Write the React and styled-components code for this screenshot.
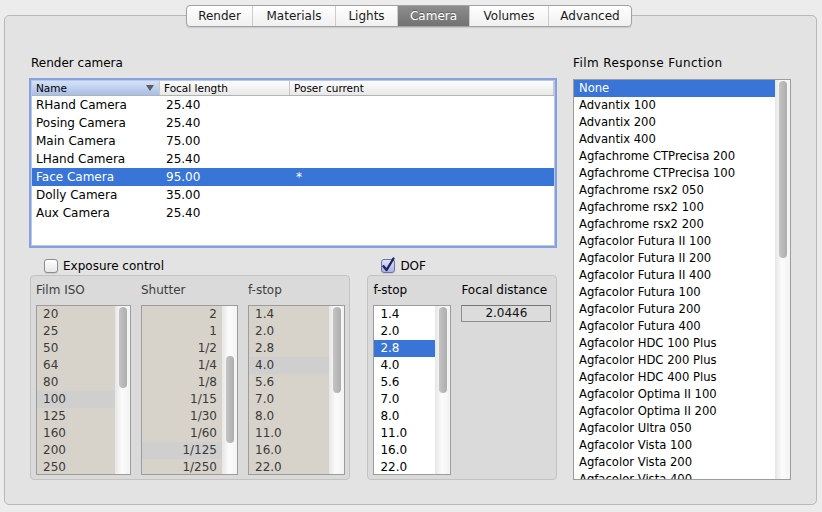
import React from "react";
import styled, { createGlobalStyle } from "styled-components";

const GlobalStyle = createGlobalStyle`
  body {
    margin: 0;
    background: #ececec;
    font-family: "DejaVu Sans", "Liberation Sans", sans-serif;
    font-size: 12px;
    color: #000;
  }
`;

const Window = styled.div`
  width: 813px;
  padding: 5px 0 0 4px;
`;

const TabBar = styled.div`
  position: relative;
  z-index: 1;
  display: flex;
  justify-content: center;
  padding-right: 3px;
  margin-bottom: -12px;
`;

const TabGroup = styled.div`
  display: flex;
  height: 22px;
  box-sizing: border-box;
  border: 1px solid #a2a2a2;
  border-radius: 4px;
  overflow: hidden;
  background: linear-gradient(#ffffff, #f0f0f0);
  box-shadow: 0 1px 1px rgba(0, 0, 0, 0.12);
`;

const Tab = styled.div`
  width: ${(p) => p.$w}px;
  box-sizing: border-box;
  text-align: center;
  line-height: 20px;
  color: ${(p) => (p.$active ? "#fff" : "#1a1a1a")};
  border-left: ${(p) => (p.$first ? "none" : "1px solid #cdcdcd")};
  background: ${(p) =>
    p.$active ? "linear-gradient(#8d8d8d, #727272)" : "transparent"};
  text-shadow: ${(p) => (p.$active ? "0 -1px 0 rgba(0,0,0,0.3)" : "none")};
`;

const Panel = styled.div`
  height: 490px;
  box-sizing: border-box;
  border: 1px solid #b8b8b8;
  border-radius: 5px;
  background: #e3e3e3;
  padding: 39px 25px 0 24px;
  display: flex;
  gap: 16px;
`;

const LeftCol = styled.div`
  width: 528px;
  display: flex;
  flex-direction: column;
`;

const RightCol = styled.div`
  width: 218px;
  display: flex;
  flex-direction: column;
`;

const Title = styled.div`
  height: 16px;
  line-height: 16px;
  margin-bottom: 7px;
  padding-left: ${(p) => p.$indent || 0}px;
  letter-spacing: ${(p) => p.$spacing || 0}px;
`;

const Table = styled.div`
  height: 170px;
  box-sizing: border-box;
  border: 2px solid #87a1dd;
  padding: 1px;
  background: #b7c7ed;
`;

const TableInner = styled.div`
  height: 100%;
  background: #fff;
`;

const HeaderRow = styled.div`
  display: grid;
  grid-template-columns: 128px 130px 1fr;
  height: 15px;
  box-sizing: border-box;
  border-bottom: 1px solid #b3b3b3;
  background: linear-gradient(#fdfdfd, #e8e8e8);
  font-size: 10.5px;
`;

const HeaderCell = styled.div`
  display: flex;
  align-items: center;
  justify-content: space-between;
  padding-left: 4px;
  line-height: 14px;
  border-right: 1px solid #c8c8c8;
  background: ${(p) =>
    p.$active ? "linear-gradient(#d6e1f5, #a8bee8)" : "transparent"};
`;

const SortArrow = styled.span`
  width: 0;
  height: 0;
  margin-right: 5px;
  border-left: 4px solid transparent;
  border-right: 4px solid transparent;
  border-top: 6px solid #5b5b5b;
`;

const Row = styled.div`
  display: grid;
  grid-template-columns: 128px 130px 1fr;
  height: 18px;
  box-sizing: border-box;
  padding-top: 1px;
  line-height: 17px;
  background: ${(p) => (p.$selected ? "#3875d7" : "transparent")};
  color: ${(p) => (p.$selected ? "#fff" : "#000")};
`;

const Cell = styled.div`
  padding-left: ${(p) => p.$pad}px;
  white-space: nowrap;
`;

const Bottom = styled.div`
  display: flex;
  gap: 17px;
  margin-top: 9px;
`;

const GroupCol = styled.div`
  width: ${(p) => p.$w}px;
  padding-left: ${(p) => p.$inset}px;
  display: flex;
  flex-direction: column;
`;

const CheckRow = styled.label`
  display: flex;
  align-items: center;
  gap: 5px;
  height: 18px;
  padding-left: 14px;
`;

const CheckBox = styled.span`
  width: 14px;
  height: 14px;
  box-sizing: border-box;
  border-radius: 3px;
  border: 1px solid ${(p) => (p.$checked ? "#6b73a6" : "#8d8d8d")};
  background: ${(p) =>
    p.$checked
      ? "linear-gradient(#dfe2f5, #a9b2df)"
      : "linear-gradient(#ffffff, #e6e6e6)"};
  box-shadow: 0 1px 1px rgba(0, 0, 0, 0.1);
  display: flex;
  align-items: center;
  justify-content: center;
  svg {
    overflow: visible;
  }
`;

const GroupBox = styled.div`
  height: 205px;
  box-sizing: border-box;
  border: 1px solid #c3c3c3;
  border-radius: 4px;
  background: #dadada;
  padding: 6px 0 0 5px;
`;

const GroupGrid = styled.div`
  display: grid;
  grid-template-columns: ${(p) => p.$cols};
  grid-template-rows: 16px auto;
  column-gap: 10px;
  row-gap: 7px;
`;

const ColLabel = styled.div`
  line-height: 16px;
  color: ${(p) => (p.$dim ? "#3d3d3d" : "#000")};
`;

const ListBox = styled.div`
  height: ${(p) => p.$h}px;
  box-sizing: border-box;
  border: 1px solid #9c9c9c;
  background: ${(p) => (p.$dim ? "#d7d3cb" : "#fff")};
  display: flex;
  overflow: hidden;
  font-size: ${(p) => p.$size || 12}px;
`;

const Items = styled.div`
  flex: 1;
  min-width: 0;
`;

const Item = styled.div`
  height: 17px;
  line-height: 17px;
  padding: 0 5px 0 ${(p) => p.$padLeft}px;
  white-space: nowrap;
  text-align: ${(p) => p.$align};
  color: ${(p) => (p.$selected ? "#fff" : p.$dim ? "#3a3a3a" : "#000")};
  background: ${(p) =>
    p.$selected ? "#3875d7" : p.$highlight ? "#cfcfcf" : "transparent"};
`;

const Track = styled.div`
  width: 15px;
  flex-shrink: 0;
  background: linear-gradient(to right, #e6e6e6, #fbfbfb 45%, #f3f3f3);
`;

const Thumb = styled.div`
  width: 8px;
  margin: ${(p) => p.$top}px 0 0 4px;
  height: ${(p) => p.$h}px;
  border-radius: 4px;
  background: linear-gradient(to right, #c4c4c4, #adadad);
`;

const FocalField = styled.div`
  height: 17px;
  box-sizing: border-box;
  border: 1px solid #8e8e8e;
  border-top-color: #767676;
  background: #dcdcdc;
  text-align: center;
  line-height: 15px;
  color: #111;
`;

const FilmList = styled(ListBox)`
  margin-top: 1px;
`;

const cameras = [
  ["RHand Camera", "25.40", ""],
  ["Posing Camera", "25.40", ""],
  ["Main Camera", "75.00", ""],
  ["LHand Camera", "25.40", ""],
  ["Face Camera", "95.00", "*"],
  ["Dolly Camera", "35.00", ""],
  ["Aux Camera", "25.40", ""],
];

const isos = ["20", "25", "50", "64", "80", "100", "125", "160", "200", "250"];
const shutters = ["2", "1", "1/2", "1/4", "1/8", "1/15", "1/30", "1/60", "1/125", "1/250"];
const fstops = ["1.4", "2.0", "2.8", "4.0", "5.6", "7.0", "8.0", "11.0", "16.0", "22.0"];

const films = [
  "None",
  "Advantix 100",
  "Advantix 200",
  "Advantix 400",
  "Agfachrome CTPrecisa 200",
  "Agfachrome CTPrecisa 100",
  "Agfachrome rsx2 050",
  "Agfachrome rsx2 100",
  "Agfachrome rsx2 200",
  "Agfacolor Futura II 100",
  "Agfacolor Futura II 200",
  "Agfacolor Futura II 400",
  "Agfacolor Futura 100",
  "Agfacolor Futura 200",
  "Agfacolor Futura 400",
  "Agfacolor HDC 100 Plus",
  "Agfacolor HDC 200 Plus",
  "Agfacolor HDC 400 Plus",
  "Agfacolor Optima II 100",
  "Agfacolor Optima II 200",
  "Agfacolor Ultra 050",
  "Agfacolor Vista 100",
  "Agfacolor Vista 200",
  "Agfacolor Vista 400",
];

const tabs = [
  ["Render", 65],
  ["Materials", 83],
  ["Lights", 62],
  ["Camera", 72],
  ["Volumes", 79],
  ["Advanced", 83],
];

function List({ items, h = 170, dim, align = "left", padLeft = 6, mark, selected, thumbTop, thumbH }) {
  return (
    <ListBox $h={h} $dim={dim}>
      <Items>
        {items.map((t) => (
          <Item
            key={t}
            $dim={dim}
            $align={align}
            $padLeft={padLeft}
            $highlight={t === mark}
            $selected={t === selected}
          >
            {t}
          </Item>
        ))}
      </Items>
      <Track>
        <Thumb $top={thumbTop} $h={thumbH} />
      </Track>
    </ListBox>
  );
}

export default function App() {
  return (
    <>
      <GlobalStyle />
      <Window>
        <TabBar>
          <TabGroup>
            {tabs.map(([t, w], i) => (
              <Tab key={t} $w={w} $first={i === 0} $active={t === "Camera"}>
                {t}
              </Tab>
            ))}
          </TabGroup>
        </TabBar>
        <Panel>
          <LeftCol>
            <Title $indent={2}>Render camera</Title>
            <Table>
              <TableInner>
                <HeaderRow>
                  <HeaderCell $active>
                    Name
                    <SortArrow />
                  </HeaderCell>
                  <HeaderCell>Focal length</HeaderCell>
                  <HeaderCell>Poser current</HeaderCell>
                </HeaderRow>
                {cameras.map(([name, focal, cur]) => (
                  <Row key={name} $selected={name === "Face Camera"}>
                    <Cell $pad={4}>{name}</Cell>
                    <Cell $pad={6}>{focal}</Cell>
                    <Cell $pad={6}>{cur}</Cell>
                  </Row>
                ))}
              </TableInner>
            </Table>
            <Bottom>
              <GroupCol $w={321} $inset={1}>
                <CheckRow>
                  <CheckBox />
                  Exposure control
                </CheckRow>
                <GroupBox>
                  <GroupGrid $cols="95px 97px 97px">
                    <ColLabel $dim>Film ISO</ColLabel>
                    <ColLabel $dim>Shutter</ColLabel>
                    <ColLabel $dim>f-stop</ColLabel>
                    <List items={isos} dim mark="100" thumbTop={1} thumbH={81} />
                    <List items={shutters} dim align="right" mark="1/125" thumbTop={50} thumbH={87} />
                    <List items={fstops} dim mark="4.0" thumbTop={1} thumbH={86} />
                  </GroupGrid>
                </GroupBox>
              </GroupCol>
              <GroupCol $w={190} $inset={0}>
                <CheckRow>
                  <CheckBox $checked>
                    <svg width="12" height="12" viewBox="0 0 12 12">
                      <path
                        d="M1.5 6.2 L4.6 10 L11.5 -1.5"
                        fill="none"
                        stroke="#1c2463"
                        strokeWidth="2.4"
                        strokeLinecap="round"
                        strokeLinejoin="round"
                      />
                    </svg>
                  </CheckBox>
                  DOF
                </CheckRow>
                <GroupBox>
                  <GroupGrid $cols="78px 90px">
                    <ColLabel>f-stop</ColLabel>
                    <ColLabel>Focal distance</ColLabel>
                    <List items={fstops} selected="2.8" thumbTop={1} thumbH={86} />
                    <div>
                      <FocalField>2.0446</FocalField>
                    </div>
                  </GroupGrid>
                </GroupBox>
              </GroupCol>
            </Bottom>
          </LeftCol>
          <RightCol>
            <Title $spacing={0.4}>Film Response Function</Title>
            <FilmList $h={401} $size={11.6}>
              <Items>
                {films.map((f) => (
                  <Item key={f} $align="left" $padLeft={5} $selected={f === "None"}>
                    {f}
                  </Item>
                ))}
              </Items>
              <Track>
                <Thumb $top={1} $h={177} />
              </Track>
            </FilmList>
          </RightCol>
        </Panel>
      </Window>
    </>
  );
}
